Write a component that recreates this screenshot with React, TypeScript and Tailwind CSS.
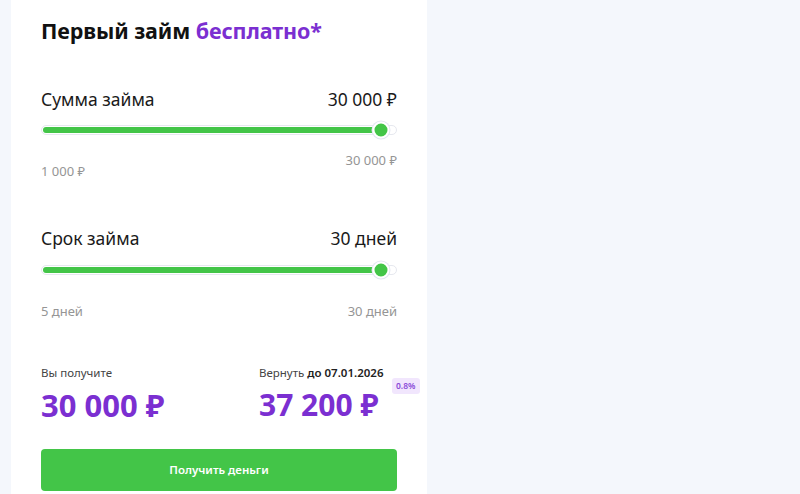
import React from "react";

function Slider({ percent }: { percent: number }) {
  return (
    <div className="relative h-[10px] rounded-full border border-[#e6e8ef] bg-white">
      <div
        className="absolute left-[1px] top-[1px] h-[6px] rounded-full bg-[#43c548]"
        style={{ width: `${percent}%` }}
      />
      <div
        className="absolute top-1/2 h-[17px] w-[17px] -translate-x-1/2 -translate-y-1/2 rounded-full border-2 border-white bg-[#43c548] shadow-[0_0_0_1px_#e3e6f2]"
        style={{ left: `${percent}%` }}
      />
    </div>
  );
}

export default function App() {
  return (
    <div
      className="flex h-[494px] w-[800px] overflow-hidden bg-[#f4f7fc]"
      style={{ fontFamily: '"Noto Sans", "Open Sans", sans-serif' }}
    >
      <div className="relative ml-[11px] w-[416px] flex-shrink-0 bg-white px-[30px] pt-[16px]">
        {/* title */}
        <h1 className="text-[21.5px] font-bold leading-[30px] tracking-[-0.1px] text-[#111]">
          Первый займ <span className="text-[#7b2fd1]">бесплатно*</span>
        </h1>

        {/* amount */}
        <div className="mt-[41px] flex items-center justify-between text-[17.5px] leading-[24px] text-[#1a1a1a]">
          <span>Сумма займа</span>
          <span>30 000 ₽</span>
        </div>
        <div className="mt-[14px]">
          <Slider percent={95.8} />
        </div>
        <div className="mt-[17px] flex items-start justify-between text-[13px] leading-[16px] text-[#959595]">
          <span className="mt-[11px]">1 000 ₽</span>
          <span>30 000 ₽</span>
        </div>

        {/* term */}
        <div className="mt-[47px] flex items-center justify-between text-[17.5px] leading-[24px] text-[#1a1a1a]">
          <span>Срок займа</span>
          <span>30 дней</span>
        </div>
        <div className="mt-[15px]">
          <Slider percent={95.8} />
        </div>
        <div className="mt-[28px] flex items-start justify-between text-[13px] leading-[16px] text-[#959595]">
          <span>5 дней</span>
          <span>30 дней</span>
        </div>

        {/* totals */}
        <div className="mt-[46px] grid grid-cols-[218px_1fr]">
          <div>
            <div className="text-[11.5px] leading-[16px] text-[#444]">Вы получите</div>
            <div className="mt-[6px] text-[31px] font-bold leading-[36px] text-[#7b2fd1]">30 000 ₽</div>
          </div>
          <div>
            <div className="text-[11.5px] leading-[16px] text-[#444]">
              Вернуть <span className="font-semibold text-[#222]">до 07.01.2026</span>
            </div>
            <div className="mt-[6px] text-[30px] font-bold leading-[36px] text-[#7b2fd1]">37 200 ₽</div>
          </div>
        </div>
        <div className="absolute left-[381px] top-[378px] rounded-[3px] bg-[#f1e6fd] px-[4px] py-[3px] text-[8.5px] font-semibold leading-[10px] text-[#8a4ad8]">
          0.8%
        </div>

        <button className="mt-[26px] flex h-[42px] w-full items-center justify-center rounded-[4px] bg-[#43c548] text-[11.5px] font-semibold text-white">
          Получить деньги
        </button>
      </div>
      <div className="flex-1" />
    </div>
  );
}
